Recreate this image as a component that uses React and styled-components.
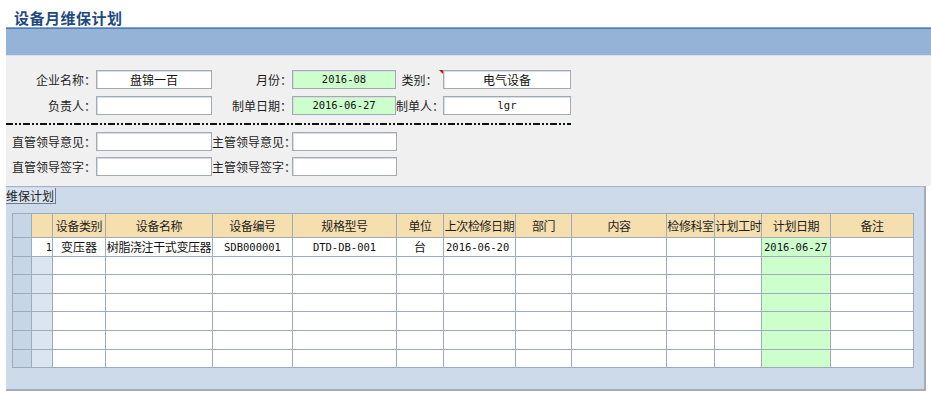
import React from 'react';
import styled, { createGlobalStyle } from 'styled-components';

const GlobalStyle = createGlobalStyle`
  html, body {
    margin: 0;
    padding: 0;
    background: #ffffff;
  }
  body {
    font-family: "Noto Sans CJK SC", "Liberation Sans", sans-serif;
    font-size: 12px;
    color: #1e1e1e;
  }
`;

const Page = styled.div`
  width: 931px;
  height: 393px;
  padding-left: 6px;
  box-sizing: border-box;
  overflow: hidden;
`;

const Title = styled.h1`
  margin: 0;
  height: 27px;
  box-sizing: border-box;
  padding: 9px 0 0 8px;
  font-size: 15px;
  line-height: 17px;
  font-weight: 700;
  color: #1d4a80;
  letter-spacing: 0.5px;
`;

const Bar = styled.div`
  height: 27px;
  background: #95b3d7;
  border-top: 1px solid #86a6cf;
  box-shadow: inset 0 1px 0 #4d7db8;
  border-bottom: 1px solid #d5e0ec;
`;

const FormArea = styled.div`
  background: #f0f0f0;
  padding: 14px 0 10px;
`;

const FormGrid = styled.div`
  display: grid;
  grid-template-columns: ${p => p.$cols};
  grid-auto-rows: 19px;
  row-gap: ${p => p.$gap}px;
  align-items: center;
`;

const Label = styled.div`
  position: relative;
  height: 19px;
  line-height: 19px;
  white-space: nowrap;
  text-align: ${p => p.$align || 'right'};
  color: #1e1e1e;
  ${p => p.$required ? `
    &::after {
      content: '';
      position: absolute;
      top: 0;
      right: 0;
      border-top: 4px solid #e01010;
      border-left: 4px solid transparent;
    }
  ` : ''}
`;

const Field = styled.div`
  height: 19px;
  box-sizing: border-box;
  border: 1px solid #a3aab3;
  box-shadow: inset 1px 1px 0 #d7dde4;
  background: ${p => p.$green ? '#ccffcc' : '#ffffff'};
  text-align: center;
  line-height: 17px;
  white-space: nowrap;
  overflow: hidden;
  font-family: ${p => p.$mono ? '"DejaVu Sans Mono", monospace' : '"Noto Sans CJK SC", sans-serif'};
  font-size: ${p => p.$mono ? '10.5px' : '12px'};
  color: #111;
`;

const Divider = styled.div`
  width: 565px;
  height: 2px;
  margin: 8px 0 7px;
  background: repeating-linear-gradient(
    to right,
    #111 0 7px,
    transparent 7px 9px,
    #111 9px 11px,
    transparent 11px 13px,
    #111 13px 15px,
    transparent 15px 17px
  );
`;

const Panel = styled.div`
  margin-right: 5px;
  height: 205px;
  box-sizing: border-box;
  background: #ccdae9;
  border-top: 1px solid #a4b4c6;
  border-right: 2px solid #a2adb8;
  border-bottom: 2px solid #a2adb8;
  padding-top: 1px;
`;

const Tab = styled.div`
  display: inline-block;
  vertical-align: top;
  height: 16px;
  box-sizing: border-box;
  line-height: 15px;
  padding-right: 1px;
  background: #d8e3ef;
  border-right: 1px solid #6f7a86;
  border-bottom: 1px solid #6f7a86;
  white-space: nowrap;
  color: #1e1e1e;
`;

const Grid = styled.table`
  margin: 8px 0 0 6px;
  border-collapse: collapse;
  table-layout: fixed;
  width: 901px;
  background: #ffffff;
`;

const HeadCell = styled.th`
  height: 23px;
  padding: 0;
  border: 1px solid #9eabb9;
  background: ${p => p.$bg || '#f5dfae'};
  font-weight: 400;
  text-align: center;
  white-space: nowrap;
  letter-spacing: -0.4px;
  color: #1e1e1e;
`;

const Cell = styled.td`
  height: 17.6px;
  padding: 0 ${p => p.$align === 'left' ? '2px' : '0'};
  border: 1px solid #9eabb9;
  background: ${p => p.$bg || '#ffffff'};
  text-align: ${p => p.$align || 'center'};
  white-space: nowrap;
  line-height: 16px;
  letter-spacing: ${p => p.$tight ? '-0.4px' : '0'};
  color: #111;
`;

const Mono = styled.span`
  font-family: "DejaVu Sans Mono", monospace;
  font-size: 10.5px;
  letter-spacing: 0;
`;

const cols = [19, 21, 53, 107, 80, 104, 47, 72, 56, 95, 48, 47, 69, 83];
const headers = ['设备类别', '设备名称', '设备编号', '规格型号', '单位', '上次检修日期', '部门', '内容', '检修科室', '计划工时', '计划日期', '备注'];

const firstRow = [
  { v: '变压器' },
  { v: '树脂浇注干式变压器', tight: true },
  { v: 'SDB000001', mono: true },
  { v: 'DTD-DB-001', mono: true },
  { v: '台' },
  { v: '2016-06-20', mono: true, align: 'left' },
  { v: '' },
  { v: '' },
  { v: '' },
  { v: '' },
  { v: '2016-06-27', mono: true, align: 'left' },
  { v: '' },
];

const PLAN_COL = 10;

export default function App() {
  const rows = [firstRow, ...Array.from({ length: 6 }, () => headers.map(() => ({ v: '' })))];
  return (
    <Page>
      <GlobalStyle />
      <Title>设备月维保计划</Title>
      <Bar />
      <FormArea>
        <FormGrid $cols="90px 116px 80px 104px 47px 128px" $gap={7}>
          <Label>企业名称：</Label>
          <Field>盘锦一百</Field>
          <Label>月份：</Label>
          <Field $green $mono>2016-08</Field>
          <Label $align="center" $required>类别：</Label>
          <Field>电气设备</Field>

          <Label>负责人：</Label>
          <Field />
          <Label>制单日期：</Label>
          <Field $green $mono>2016-06-27</Field>
          <Label $align="center">制单人：</Label>
          <Field $mono>lgr</Field>
        </FormGrid>
        <Divider />
        <FormGrid $cols="90px 116px 80px 105px" $gap={6}>
          <Label>直管领导意见：</Label>
          <Field />
          <Label $align="left">主管领导意见：</Label>
          <Field />

          <Label>直管领导签字：</Label>
          <Field />
          <Label $align="left">主管领导签字：</Label>
          <Field />
        </FormGrid>
      </FormArea>
      <Panel>
        <Tab>维保计划</Tab>
        <Grid>
          <colgroup>
            {cols.map((w, i) => <col key={i} style={{ width: w }} />)}
          </colgroup>
          <thead>
            <tr>
              <HeadCell $bg="#c7d6e6" />
              <HeadCell />
              {headers.map(h => <HeadCell key={h}>{h}</HeadCell>)}
            </tr>
          </thead>
          <tbody>
            {rows.map((row, r) => (
              <tr key={r}>
                <Cell $bg="#c7d6e6" />
                <Cell $bg={r === 0 ? '#ffffff' : '#dbe5f1'} $align="right">{r === 0 ? <Mono>1</Mono> : ''}</Cell>
                {row.map((c, i) => (
                  <Cell key={i} $align={c.align} $tight={c.tight} $bg={i === PLAN_COL ? '#ccffcc' : undefined}>
                    {c.mono ? <Mono>{c.v}</Mono> : c.v}
                  </Cell>
                ))}
              </tr>
            ))}
          </tbody>
        </Grid>
      </Panel>
    </Page>
  );
}
